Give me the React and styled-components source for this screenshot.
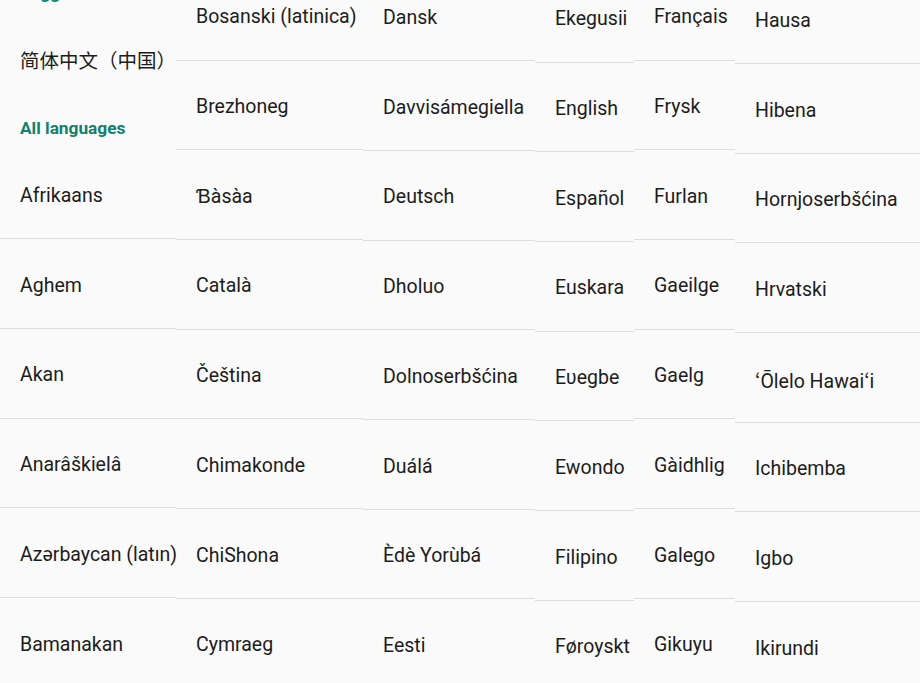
import React from "react";
import styled, { createGlobalStyle } from "styled-components";

const GlobalStyle = createGlobalStyle`
  html, body {
    margin: 0;
    padding: 0;
    background: #fafafa;
    overflow: hidden;
  }
  body {
    font-family: Roboto, "Noto Sans", "Noto Sans CJK SC", sans-serif;
  }
`;

const ROW_H = 89.7;

const Screen = styled.div`
  width: 920px;
  height: 683px;
  overflow: hidden;
  background: #fafafa;
  display: flex;
  align-items: flex-start;
`;

const Column = styled.div`
  width: ${(p) => p.$width}px;
  flex: 0 0 ${(p) => p.$width}px;
  display: flex;
  flex-direction: column;
  margin-top: ${(p) => p.$offset}px;
`;

const SectionHeader = styled.div`
  height: 45px;
  display: flex;
  align-items: center;
  padding-left: 20px;
  padding-top: 1px;
  box-sizing: border-box;
  font-family: Roboto, sans-serif;
  font-weight: 700;
  font-size: 17.3px;
  color: #10806f;
  white-space: nowrap;
`;

const Row = styled.div`
  height: ${ROW_H}px;
  flex: 0 0 ${ROW_H}px;
  box-sizing: border-box;
  display: flex;
  align-items: center;
  padding-left: 20px;
  padding-top: ${(p) => (p.$divider ? 3.5 : 0)}px;
  border-bottom: ${(p) => (p.$divider ? "1.5px solid #dedede" : "none")};
  font-family: Roboto, "Noto Sans CJK SC", sans-serif;
  font-size: 19.5px;
  color: #1c1c1c;
  white-space: nowrap;
`;

const columns = [
  {
    width: 176,
    offset: -30.2,
    items: [
      { type: "header", text: "Suggested" },
      { type: "row", text: "简体中文（中国）", divider: false },
      { type: "header", text: "All languages" },
      { type: "row", text: "Afrikaans" },
      { type: "row", text: "Aghem" },
      { type: "row", text: "Akan" },
      { type: "row", text: "Anarâškielâ" },
      { type: "row", text: "Azərbaycan (latın)" },
      { type: "row", text: "Bamanakan" },
    ],
  },
  {
    width: 187,
    offset: 60.5 - ROW_H,
    items: [
      "Bosanski (latinica)",
      "Brezhoneg",
      "Ɓàsàa",
      "Català",
      "Čeština",
      "Chimakonde",
      "ChiShona",
      "Cymraeg",
    ],
  },
  {
    width: 172,
    offset: 61.2 - ROW_H,
    items: [
      "Dansk",
      "Davvisámegiella",
      "Deutsch",
      "Dholuo",
      "Dolnoserbšćina",
      "Duálá",
      "Èdè Yorùbá",
      "Eesti",
    ],
  },
  {
    width: 99,
    offset: 62.5 - ROW_H,
    items: [
      "Ekegusii",
      "English",
      "Español",
      "Euskara",
      "Eʋegbe",
      "Ewondo",
      "Filipino",
      "Føroyskt",
    ],
  },
  {
    width: 101,
    offset: 60.5 - ROW_H,
    items: [
      "Français",
      "Frysk",
      "Furlan",
      "Gaeilge",
      "Gaelg",
      "Gàidhlig",
      "Galego",
      "Gikuyu",
    ],
  },
  {
    width: 185,
    offset: 64 - ROW_H,
    items: [
      "Hausa",
      "Hibena",
      "Hornjoserbšćina",
      "Hrvatski",
      "ʻŌlelo Hawaiʻi",
      "Ichibemba",
      "Igbo",
      "Ikirundi",
    ],
  },
];

export default function App() {
  return (
    <>
      <GlobalStyle />
      <Screen>
        {columns.map((col, ci) => (
          <Column key={ci} $width={col.width} $offset={col.offset}>
            {col.items.map((item, i) => {
              const it = typeof item === "string" ? { type: "row", text: item } : item;
              if (it.type === "header") {
                return <SectionHeader key={i}>{it.text}</SectionHeader>;
              }
              return (
                <Row key={i} $divider={it.divider !== false}>
                  {it.text}
                </Row>
              );
            })}
          </Column>
        ))}
      </Screen>
    </>
  );
}
